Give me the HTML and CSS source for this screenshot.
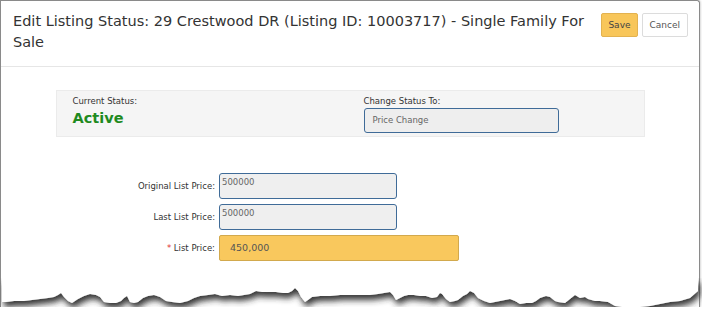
FILE: index.html
```html
<!DOCTYPE html>
<html>
<head>
    <meta charset="utf-8">
    <link rel="stylesheet" href="styles.css">
</head>
<body>
    <div class="frame">
        <div class="header">
            <h1 class="title">Edit Listing Status: 29 Crestwood DR (Listing ID: 10003717) - Single Family For Sale</h1>
            <div class="actions">
                <button class="btn btn-save">Save</button>
                <button class="btn btn-cancel">Cancel</button>
            </div>
        </div>

        <div class="content">
            <div class="status-panel">
                <div class="status-col">
                    <div class="small-label">Current Status:</div>
                    <div class="status-value">Active</div>
                </div>
                <div class="status-col">
                    <div class="small-label">Change Status To:</div>
                    <div class="select">Price Change</div>
                </div>
            </div>

            <div class="form">
                <div class="row">
                    <label class="field-label">Original List Price:</label>
                    <div class="input readonly">500000</div>
                </div>
                <div class="row">
                    <label class="field-label">Last List Price:</label>
                    <div class="input readonly">500000</div>
                </div>
                <div class="row">
                    <label class="field-label"><span class="req">*</span> List Price:</label>
                    <div class="input price">450,000</div>
                </div>
            </div>
        </div>

        <!-- torn paper edge at the bottom of the capture -->
        <svg class="torn" width="702" height="42" viewBox="0 0 702 42">
            <defs>
                <filter id="shade" x="-5%" y="-50%" width="110%" height="220%">
                    <feDropShadow dx="2" dy="5" stdDeviation="3.4" flood-color="#2a2a2a" flood-opacity="0.95"/>
                </filter>
            </defs>
            <path fill="#fff" filter="url(#shade)" d="M2 0 H698 V13
                L690 20 L680 23 L670 24 L660 26 L650 28 L640 29 L630 30 L622 29 L615 28 L608 24 L600 23 L595 23 L588 21 L585 19 L580 20 L575 17 L570 21 L565 25 L558 24 L555 23 L550 19 L546 18 L540 20 L536 23 L532 25 L526 25 L520 26 L515 23 L510 21 L505 22 L500 23 L495 24 L490 25 L484 23 L478 20 L474 15 L470 13 L467 16 L463 18 L458 22 L455 23 L450 24 L446 21 L442 16 L440 15 L437 19 L432 20 L426 18 L420 18 L414 17 L408 17 L404 18 L400 20 L396 22 L393 17 L390 14 L384 15 L378 16 L370 17 L360 17 L350 17 L340 17 L330 18 L320 18 L312 19 L308 22 L305 24 L301 19 L298 13 L295 10 L292 13 L288 15 L283 15 L276 14 L268 14 L262 14 L256 13 L250 16 L244 17 L238 18 L230 17 L222 18 L215 16 L208 17 L200 18 L194 20 L188 23 L180 25 L172 24 L166 23 L160 19 L154 17 L148 18 L143 20 L138 24 L134 25 L130 24 L127 18 L124 20 L121 23 L116 25 L110 25 L104 24 L100 19 L96 17 L90 16 L84 18 L78 21 L72 25 L68 23 L64 19 L61 15 L58 17 L54 19 L48 20 L40 21 L32 22 L24 23 L14 23 L6 24 L2 24 Z"/>
        </svg>
    </div>
</body>
</html>
```

FILE: styles.css
```css
html, body {
    margin: 0;
    background: #fff;
}
.frame {
    position: relative;
    width: 698px;
    height: 306px;
    border: 1px solid #8a8a8a;
    border-bottom: none;
    border-top-right-radius: 3px;
    box-shadow: 1px 0 2px rgba(0, 0, 0, 0.15);
    font-family: "DejaVu Sans", Verdana, sans-serif;
    color: #333;
    overflow: visible;
}
.header {
    display: flex;
    align-items: flex-start;
    height: 55px;
    padding: 10px 11px 0 12px;
    border-bottom: 1px solid #e6e6e6;
}
.title {
    flex: 1;
    margin: 0;
    font-size: 14.5px;
    font-weight: normal;
    line-height: 21px;
    color: #333;
    padding-right: 16px;
}
.actions {
    display: flex;
    gap: 4px;
    padding-top: 2px;
}
.btn {
    height: 24px;
    padding: 0 6px;
    border-radius: 2px;
    font-family: "DejaVu Sans", Verdana, sans-serif;
    font-size: 9px;
    color: #444;
    cursor: pointer;
}
.btn-save {
    background: #f8c65a;
    border: 1px solid #e3b250;
}
.btn-cancel {
    background: #fff;
    border: 1px solid #dcdcdc;
    color: #555;
    padding: 0 7px;
}
.content {
    padding-top: 23px;
}
.status-panel {
    display: grid;
    grid-template-columns: 291px 1fr;
    width: 571px;
    height: 40px;
    margin: 0 auto;
    padding: 5px 0 0 16px;
    background: #f5f5f5;
    border: 1px solid #ebebeb;
}
.small-label {
    font-size: 8.5px;
    line-height: 11px;
    color: #333;
}
.status-value {
    font-size: 14.5px;
    font-weight: bold;
    color: #1f8a1f;
    line-height: 18px;
    margin-top: 2px;
}
.select {
    width: 185px;
    height: 23px;
    margin-top: 1px;
    padding-left: 8px;
    line-height: 23px;
    font-size: 8.5px;
    color: #666;
    background: #eeeeee;
    border: 1px solid #3f6b98;
    border-radius: 3px;
}
.form {
    display: flex;
    flex-direction: column;
    gap: 5px;
    margin-top: 36px;
}
.row {
    display: flex;
    align-items: center;
}
.field-label {
    width: 214px;
    margin-right: 4px;
    text-align: right;
    font-size: 8.5px;
    color: #333;
}
.req {
    color: #e03030;
}
.input {
    height: 24px;
    border-radius: 3px;
    font-size: 8.5px;
    box-sizing: content-box;
}
.readonly {
    width: 174px;
    padding: 3px 0 0 2px;
    height: 21px;
    background: #efefef;
    border: 1px solid #3f6b98;
    color: #666;
}
.price {
    width: 228px;
    padding-left: 10px;
    line-height: 24px;
    font-size: 9.5px;
    background: #f9c85d;
    border: 1px solid #d2a94d;
    border-radius: 2px;
    color: #555;
}
.torn {
    position: absolute;
    left: -1px;
    top: 277px;
    display: block;
}
```
